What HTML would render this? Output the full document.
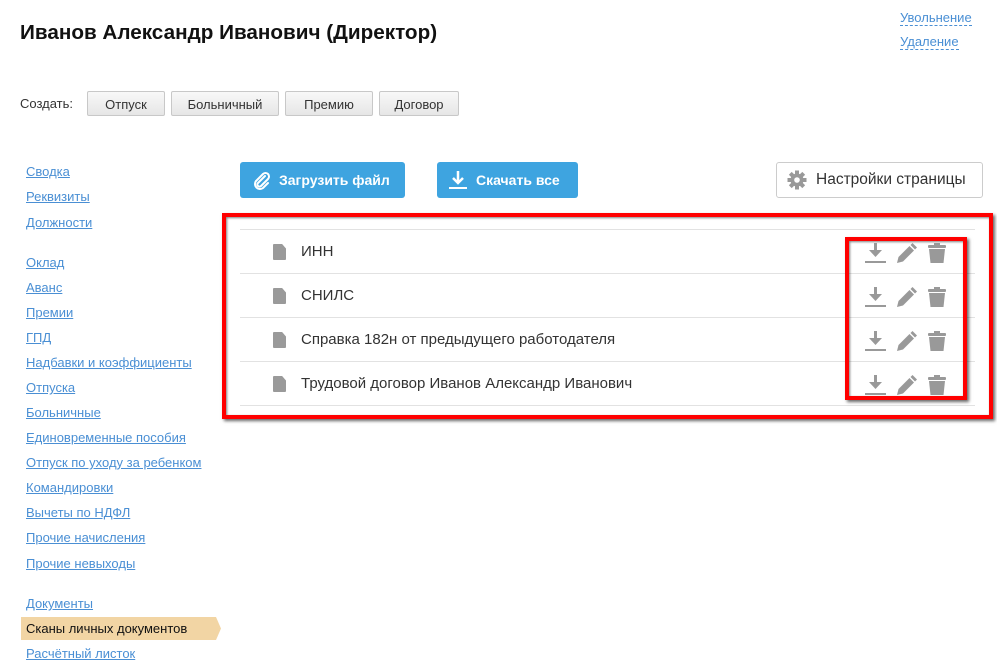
<!DOCTYPE html>
<html><head><meta charset="utf-8"><style>
body{margin:0;width:997px;height:669px;overflow:hidden;background:#fff;font-family:"Liberation Sans",Arial,sans-serif;position:relative}
.abs{position:absolute}
h1{position:absolute;left:20px;top:21px;margin:0;font-size:20.7px;font-weight:bold;color:#111}
.tl{position:absolute;left:900px;font-size:13px;color:#4a8fd4;text-decoration:none;border-bottom:1px dashed #4a8fd4;line-height:15px}
.gbtn{position:absolute;top:91px;height:25px;border:1px solid #c8c8c8;border-radius:2px;background:linear-gradient(#f8f8f8,#e6e6e6);font-size:13px;color:#333;text-align:center;line-height:25px;box-sizing:border-box}
.side a{position:absolute;left:26px;font-size:13px;color:#4a8fd4;text-decoration:underline;line-height:16px}
.bbtn{position:absolute;top:162px;height:36px;background:#3ea4e0;border-radius:3px;color:#fff;font-size:15px;line-height:36px;box-sizing:border-box}
.line{position:absolute;left:240px;width:735px;height:1px;background:#e2e2e2}
.row{position:absolute;left:301px;font-size:15px;color:#333;line-height:18px}
.doc{position:absolute;left:273px;width:13px;height:16px;background:#9a9a9a;clip-path:polygon(0 0,70% 0,100% 28%,100% 100%,0 100%);border-radius:1px}
.red{position:absolute;border:4px solid #f00;box-shadow:2px 2px 3px rgba(0,0,0,.6),inset 1px 1px 2px rgba(0,0,0,.5)}
</style></head><body>
<h1>Иванов Александр Иванович (Директор)</h1>
<a class="tl" style="top:10px">Увольнение</a>
<a class="tl" style="top:34px">Удаление</a>
<div class="abs" style="left:20px;top:96px;font-size:13px;color:#333">Создать:</div>
<div class="gbtn" style="left:87px;width:78px">Отпуск</div>
<div class="gbtn" style="left:171px;width:108px">Больничный</div>
<div class="gbtn" style="left:285px;width:88px">Премию</div>
<div class="gbtn" style="left:379px;width:80px">Договор</div>
<div class="side">
<a style="top:164px">Сводка</a><a style="top:189px">Реквизиты</a><a style="top:215px">Должности</a>
<a style="top:255px">Оклад</a><a style="top:280px">Аванс</a><a style="top:305px">Премии</a><a style="top:330px">ГПД</a><a style="top:355px">Надбавки и коэффициенты</a><a style="top:380px">Отпуска</a><a style="top:405px">Больничные</a><a style="top:430px">Единовременные пособия</a><a style="top:455px">Отпуск по уходу за ребенком</a><a style="top:480px">Командировки</a><a style="top:505px">Вычеты по НДФЛ</a><a style="top:530px">Прочие начисления</a><a style="top:556px">Прочие невыходы</a>
<a style="top:596px">Документы</a><a style="top:646px">Расчётный листок</a>
</div>
<div class="abs" style="left:21px;top:617px;width:200px;height:23px;background:#f2d5a4;clip-path:polygon(0 0,195px 0,200px 50%,195px 100%,0 100%)"></div>
<div class="abs" style="left:26px;top:621px;font-size:13px;color:#111">Сканы личных документов</div>
<div class="bbtn" style="left:240px;width:165px">
<svg class="abs" style="left:12px;top:9px" width="20" height="20" viewBox="0 0 20 20"><path d="M13 5 L6 12 a2 2 0 0 0 3 3 L16 8 a3.5 3.5 0 0 0 -5 -5 L4 10 a5 5 0 0 0 7 7 L16 12" fill="none" stroke="#fff" stroke-width="2" stroke-linecap="round"/></svg>
<span class="abs" style="left:39px;font-weight:bold;font-size:14px">Загрузить файл</span></div>
<div class="bbtn" style="left:437px;width:141px">
<svg class="abs" style="left:11px;top:8px" width="20" height="20" viewBox="0 0 20 20"><path d="M10 1v11M5 8l5 5 5-5" fill="none" stroke="#fff" stroke-width="2.5"/><path d="M1 18h18" stroke="#fff" stroke-width="2"/></svg>
<span class="abs" style="left:39px;font-size:14px;font-weight:bold">Скачать все</span></div>
<div class="abs" style="left:776px;top:162px;width:207px;height:36px;border:1px solid #ccc;border-radius:3px;box-sizing:border-box">
<svg class="abs" style="left:10px;top:7px" width="20" height="20" viewBox="0 0 20 20"><g fill="#999"><circle cx="10" cy="10" r="6.5"/><rect x="8" y="0.5" width="4" height="19"/><rect x="0.5" y="8" width="19" height="4"/><rect x="8" y="0.5" width="4" height="19" transform="rotate(45 10 10)"/><rect x="8" y="0.5" width="4" height="19" transform="rotate(-45 10 10)"/></g><circle cx="10" cy="10" r="2.8" fill="#fff"/></svg>
<span class="abs" style="left:39px;top:8px;font-size:15.5px;color:#333">Настройки страницы</span></div>
<div class="red" style="left:222px;top:213px;width:763px;height:198px"></div>
<div class="line" style="top:229px"></div><div class="line" style="top:273px"></div><div class="line" style="top:317px"></div><div class="line" style="top:361px"></div><div class="line" style="top:405px"></div>
<div class="doc" style="top:244px"></div><div class="row" style="top:243px">ИНН</div>
<div class="doc" style="top:288px"></div><div class="row" style="top:287px">СНИЛС</div>
<div class="doc" style="top:332px"></div><div class="row" style="top:331px">Справка 182н от предыдущего работодателя</div>
<div class="doc" style="top:376px"></div><div class="row" style="top:375px">Трудовой договор Иванов Александр Иванович</div>
<div class="red" style="left:845px;top:237px;width:114px;height:155px"></div>
<svg class="abs" style="left:864px;top:240px" width="90" height="160" viewBox="0 0 90 160">
<defs><g id="ic" fill="#999">
<rect x="10" y="1" width="3" height="10"/><path d="M5 8l6.5 7 6.5-7z"/><rect x="1" y="19" width="21" height="2"/>
<path d="M33 21l1.5-6 11-11 4.5 4.5-11 11z"/><path d="M46.5 3l2-2 4.5 4.5-2 2z"/>
<rect x="64" y="3" width="18" height="3" rx="1"/><rect x="70" y="1" width="6" height="3"/><path d="M65 7h16l-1.5 14h-13z"/>
</g></defs>
<use href="#ic" y="2"/><use href="#ic" y="46"/><use href="#ic" y="90"/><use href="#ic" y="134"/>
</svg>
</body></html>
